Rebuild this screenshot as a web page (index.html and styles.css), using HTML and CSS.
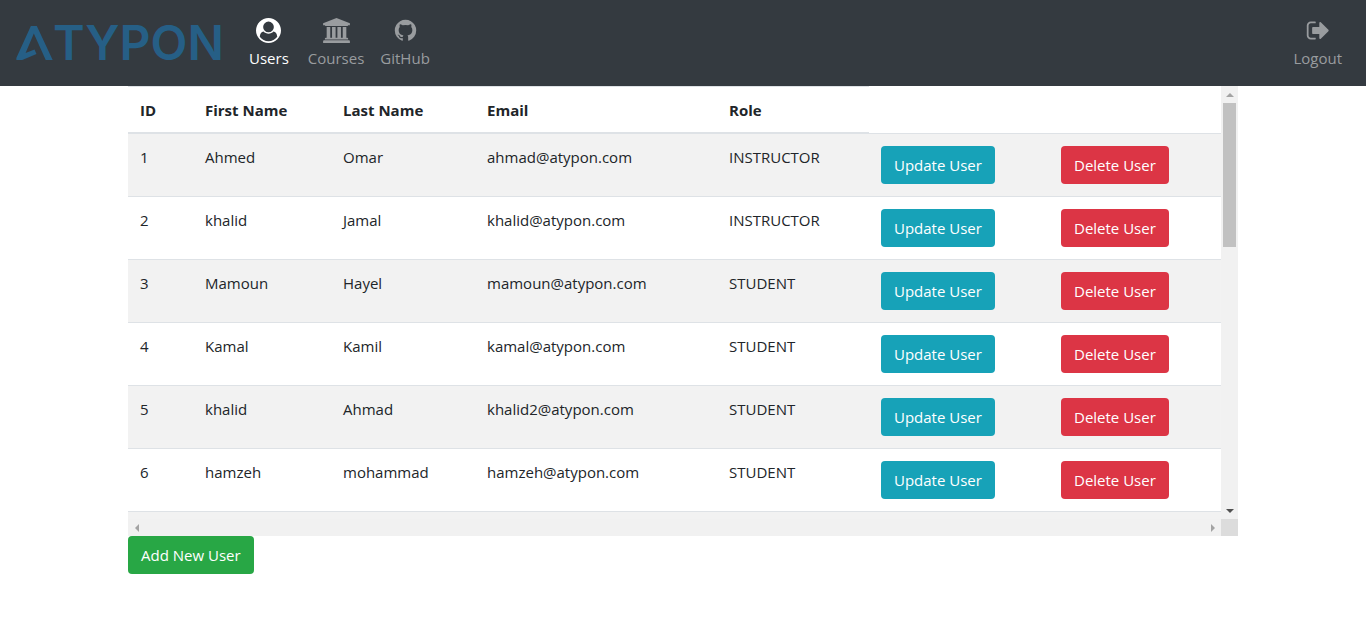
FILE: index.html
```html
<!DOCTYPE html>
<html lang="en">
<head>
<meta charset="utf-8">
<meta name="viewport" content="width=device-width, initial-scale=1">
<title>Users</title>
<link rel="stylesheet" href="styles.css">
</head>
<body>
<header class="navbar">
  <a class="brand" href="#" aria-label="Atypon">
    <svg class="brand-mark" viewBox="48 77 110 103" aria-hidden="true"><path d="M92 77h18l48 103h-21L101 100 76 159l27-11 6 14-43 18H48v-6z"/></svg>
    <span class="brand-name">TYPON</span>
  </a>
  <nav class="nav">
    <a class="nav-link nav-link-first active" href="#">
      <svg class="icon" viewBox="0 0 1792 1792" aria-hidden="true"><path d="M1523 1339q-22-155-87.5-257.5t-184.5-118.5q-67 74-159.5 115.5t-195.5 41.5-195.5-41.5-159.5-115.5q-119 16-184.5 118.5t-87.5 257.5q106 150 271 237.5t356 87.5 356-87.5 271-237.5zm-243-699q0-159-112.5-271.5t-271.5-112.5-271.5 112.5-112.5 271.5 112.5 271.5 271.5 112.5 271.5-112.5 112.5-271.5zm512 256q0 182-71 347.5t-190.5 286-285.5 191.5-349 71-349-71-285.5-191.5-190.5-286-71-347.5 71-348 191-286 286-191 348-71 348 71 286 191 191 286 71 348z"/></svg>
      <span>Users</span>
    </a>
    <a class="nav-link" href="#">
      <svg class="icon icon-wide" viewBox="-128 0 1920 1792" aria-hidden="true"><path d="M832 0l960 384v128h-128q0 26-20.5 45t-48.5 19h-1526q-28 0-48.5-19t-20.5-45h-128v-128zm-704 640h256v768h128v-768h256v768h128v-768h256v768h128v-768h256v768h59q28 0 48.5 19t20.5 45v64h-1664v-64q0-26 20.5-45t48.5-19h59v-768zm1595 960q28 0 48.5 19t20.5 45v128h-1920v-128q0-26 20.5-45t48.5-19h1782z"/></svg>
      <span>Courses</span>
    </a>
    <a class="nav-link" href="#">
      <svg class="icon" viewBox="0 0 1792 1792" aria-hidden="true"><path d="M896 128q209 0 385.5 103t279.5 279.5 103 385.5q0 251-146.5 451.5t-378.5 277.5q-27 5-40-7t-13-30q0-3 .5-76.5t.5-134.5q0-97-52-142 57-6 102.5-18t94-39 81-66.5 53-105 20.5-150.5q0-119-79-206 37-91-8-204-28-9-81 11t-92 44l-38 24q-93-26-192-26t-192 26q-16-11-42.5-27t-83.5-38.5-85-13.5q-45 113-8 204-79 87-79 206 0 85 20.5 150t52.5 105 80.5 67 94 39 102.5 18q-39 36-49 103-21 10-45 15t-57 5-65.5-21.5-55.5-62.5q-19-32-48.5-52t-49.5-24l-20-3q-21 0-29 4.5t-5 11.5 9 14 13 12l7 5q22 10 43.5 38t31.5 51l10 23q13 38 44 61.5t67 30 69.5 7 55.5-3.5l23-4q0 38 .5 88.5t.5 54.5q0 18-13 30t-40 7q-232-77-378.5-277.5t-146.5-451.5q0-209 103-385.5t279.5-279.5 385.5-103z"/></svg>
      <span>GitHub</span>
    </a>
  </nav>
  <a class="nav-link logout" href="#">
    <svg class="icon" viewBox="0 0 1664 1792" aria-hidden="true"><path d="M704 1440q0 4 1 20t.5 26.5-3 23.5-10 19.5-20.5 6.5h-320q-119 0-203.5-84.5t-84.5-203.5v-704q0-119 84.5-203.5t203.5-84.5h320q13 0 22.5 9.5t9.5 22.5q0 4 1 20t.5 26.5-3 23.5-10 19.5-20.5 6.5h-320q-66 0-113 47t-47 113v704q0 66 47 113t113 47h312l11.5 1 11.5 3 8 5.5 7 9 2 13.5zm928-544q0 26-19 45l-544 544q-19 19-45 19t-45-19-19-45v-288h-448q-26 0-45-19t-19-45v-384q0-26 19-45t45-19h448v-288q0-26 19-45t45-19 45 19l544 544q19 19 19 45z"/></svg>
    <span>Logout</span>
  </a>
</header>

<main class="container">
  <div class="scroller">
    <div class="viewport">
      <table class="table">
        <colgroup>
          <col class="col-id"><col class="col-first"><col class="col-last"><col class="col-email"><col class="col-role"><col class="col-update"><col class="col-delete">
        </colgroup>
        <thead>
          <tr><th scope="col">ID</th><th scope="col">First Name</th><th scope="col">Last Name</th><th scope="col">Email</th><th scope="col">Role</th></tr>
        </thead>
        <tbody>
          <tr><td>1</td><td>Ahmed</td><td>Omar</td><td>ahmad@atypon.com</td><td>INSTRUCTOR</td><td class="action"><button class="btn btn-info" type="button">Update User</button></td><td class="action"><button class="btn btn-danger" type="button">Delete User</button></td></tr>
          <tr><td>2</td><td>khalid</td><td>Jamal</td><td>khalid@atypon.com</td><td>INSTRUCTOR</td><td class="action"><button class="btn btn-info" type="button">Update User</button></td><td class="action"><button class="btn btn-danger" type="button">Delete User</button></td></tr>
          <tr><td>3</td><td>Mamoun</td><td>Hayel</td><td>mamoun@atypon.com</td><td>STUDENT</td><td class="action"><button class="btn btn-info" type="button">Update User</button></td><td class="action"><button class="btn btn-danger" type="button">Delete User</button></td></tr>
          <tr><td>4</td><td>Kamal</td><td>Kamil</td><td>kamal@atypon.com</td><td>STUDENT</td><td class="action"><button class="btn btn-info" type="button">Update User</button></td><td class="action"><button class="btn btn-danger" type="button">Delete User</button></td></tr>
          <tr><td>5</td><td>khalid</td><td>Ahmad</td><td>khalid2@atypon.com</td><td>STUDENT</td><td class="action"><button class="btn btn-info" type="button">Update User</button></td><td class="action"><button class="btn btn-danger" type="button">Delete User</button></td></tr>
          <tr><td>6</td><td>hamzeh</td><td>mohammad</td><td>hamzeh@atypon.com</td><td>STUDENT</td><td class="action"><button class="btn btn-info" type="button">Update User</button></td><td class="action"><button class="btn btn-danger" type="button">Delete User</button></td></tr>
          <tr><td></td><td></td><td></td><td></td><td></td><td></td><td></td></tr>
        </tbody>
      </table>
    </div>
    <div class="bar bar-vertical" aria-hidden="true">
      <span class="arrow"><svg viewBox="0 0 8 4" class="arrow-y"><path d="M0 4l4-4 4 4z"/></svg></span>
      <span class="thumb"></span>
      <span class="arrow arrow-end"><svg viewBox="0 0 8 4" class="arrow-y arrow-dark"><path d="M0 0h8L4 4z"/></svg></span>
    </div>
    <div class="bar bar-horizontal" aria-hidden="true">
      <span class="arrow"><svg viewBox="0 0 4 8" class="arrow-x"><path d="M4 0v8L0 4z"/></svg></span>
      <span class="arrow arrow-end"><svg viewBox="0 0 4 8" class="arrow-x"><path d="M0 0v8l4-4z"/></svg></span>
    </div>
    <div class="corner"></div>
  </div>
  <button class="btn btn-success" type="button">Add New User</button>
</main>
</body>
</html>
```
FILE: styles.css
```css
*, *::before, *::after { box-sizing: border-box; }

body {
  margin: 0;
  background: #fff;
  color: #212529;
  font-family: "Segoe UI", "Open Sans", "Noto Sans", sans-serif;
  font-size: 15px;
  line-height: 24px;
}

/* Top bar */
.navbar {
  display: flex;
  align-items: center;
  padding: 8px 16px;
  background: #343a40;
}
.brand {
  display: flex;
  align-items: center;
  width: 225px;
  color: #265f86;
  text-decoration: none;
}
.brand-mark {
  flex: none;
  width: 37px;
  height: 34px;
  fill: currentColor;
}
.brand-name {
  font-family: Inter, sans-serif;
  font-size: 48px;
  font-weight: 600;
  line-height: 48px;
}
.nav { display: flex; }
.nav-link {
  display: flex;
  flex-direction: column;
  align-items: center;
  gap: 3px;
  padding: 10px 8px 8px;
  color: #999c9f;
  text-decoration: none;
}
.nav-link-first { margin-right: 3px; }
.active { color: #fff; }
.logout { margin-left: auto; }
.icon {
  width: 25px;
  height: 25px;
  fill: currentColor;
}
.icon-wide { width: 27px; }

/* Users list */
.container {
  max-width: 1110px;
  margin: 0 auto;
}
.scroller {
  display: grid;
  grid-template-columns: minmax(0, 1fr) 17px;
  grid-template-rows: 433px 17px;
}
.viewport { overflow: hidden; }
.table {
  width: 100%;
  table-layout: fixed;
  border-collapse: collapse;
}
.col-id { width: 65px; }
.col-first { width: 138px; }
.col-last { width: 144px; }
.col-email { width: 242px; }
.col-role { width: 152px; }
.col-update { width: 180px; }
.col-delete { width: 172px; }
.table th, .table td {
  padding: 11px 12px;
  border-top: 1px solid #dee2e6;
  text-align: left;
  vertical-align: top;
}
.table th {
  padding-bottom: 10px;
  border-bottom: 2px solid #dee2e6;
  font-weight: 700;
}
.table td { height: 63px; }
.table .action { padding: 12px; }
.table tbody tr:nth-child(odd) { background: #f2f2f2; }

.btn {
  display: block;
  padding: 6px 12px;
  border: 1px solid transparent;
  border-radius: 4px;
  color: #fff;
  font: inherit;
  white-space: nowrap;
  cursor: pointer;
}
.btn-info { background: #17a2b8; }
.btn-danger { background: #dc3545; }
.btn-success { background: #28a745; }

/* Scroll bars */
.bar {
  display: flex;
  background: #f1f1f1;
}
.bar-vertical { flex-direction: column; }
.bar-horizontal { grid-row: 2; }
.corner { background: #dcdcdc; }
.arrow {
  display: flex;
  flex: none;
  align-items: center;
  justify-content: center;
  width: 17px;
  height: 17px;
}
.bar-vertical .arrow-end { margin-top: auto; }
.bar-horizontal .arrow-end { margin-left: auto; }
.arrow-y, .arrow-x { fill: #a3a3a3; }
.arrow-y { width: 8px; height: 4px; }
.arrow-x { width: 4px; height: 8px; }
.arrow-dark { fill: #505050; }
.thumb {
  height: 144px;
  margin: 0 2px;
  background: #c1c1c1;
}
```
